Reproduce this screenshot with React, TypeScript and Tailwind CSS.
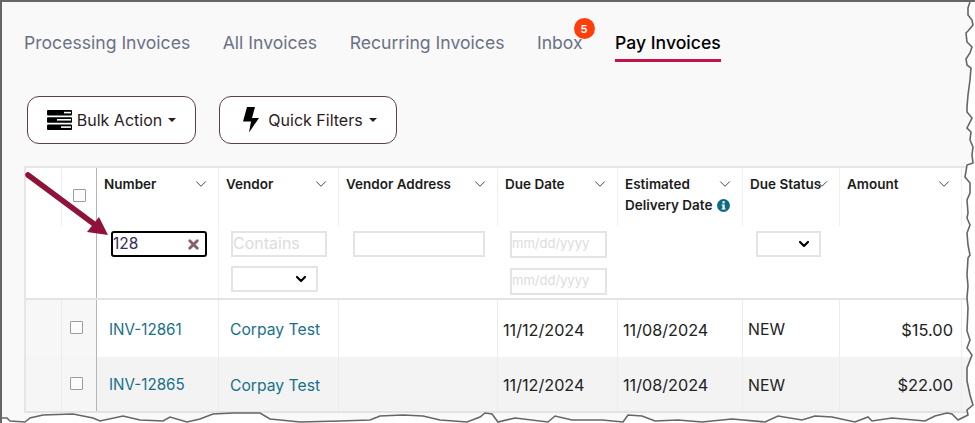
import { ChevronDown, X } from "lucide-react";

const font = "font-['Inter','Liberation_Sans',sans-serif]";
const columns = "grid-cols-[36px_35px_122px_120px_159px_120px_125px_97px_122px_19px]";

const rows = [
  { id: "INV-12861", amount: "$15.00", bg: "bg-white", lead: "bg-[#f7f7f7]", line: "border-t-2 border-[#e3e3e3] h-[59px]" },
  { id: "INV-12865", amount: "$22.00", bg: "bg-[#f3f3f3]", lead: "bg-[#f6f6f6]", line: "border-b-2 border-[#e3e3e3] h-[56px]" },
];

// outline of the torn paper edge, right side then bottom
const edge =
  "M970 2 L968 8 L968 15 L972 20 L973 25 L968 31 L966 33 L967 42 L972 47 L970 53 L966 59 L967 65 L971 68 L970 80 L968 95 L967 107 L967 112 L972 118 L967 128 L971 132 L970 140 L973 147 L972 155 L973 163 L967 165 L965 177 L970 183 L970 193 L967 200 L968 213 L967 218 L970 225 L967 233 L968 245 L970 255 L968 258 L967 275 L968 286 L967 298 L968 308 L967 331 L970 340 L967 348 L972 355 L967 368 L967 381 L970 395 L973 405 L967 410 L968 415 L958 420 L952 414 L947 413 L935 416 L925 421 L892 418 L872 421 L868 417 L855 422 L832 417 L815 416 L802 420 L778 416 L765 422 L732 419 L702 422 L678 420 L655 421 L642 416 L628 415 L623 422 L602 420 L572 420 L555 416 L548 422 L515 418 L498 422 L492 414 L485 413 L480 417 L467 422 L440 420 L423 416 L403 415 L380 416 L370 420 L340 421 L300 422 L280 420 L270 419 L260 413 L233 413 L213 414 L200 419 L187 422 L170 417 L163 421 L140 420 L123 416 L100 421 L93 418 L73 414 L43 415 L30 418 L25 422 L10 421 L7 418 L2 418";

function HeaderCell({ label, second, info }: { label: string; second?: string; info?: boolean }) {
  return (
    <div className="h-[58px] border-r border-[#efefef] pt-[6px] pl-[7px] pr-2 relative text-[13.5px] leading-[21px] font-semibold text-[#1c1c1c]">
      <div>{label}</div>
      {second && (
        <div className="flex items-center gap-[4px]">
          {second}
          {info && (
            <svg width="13" height="13" viewBox="0 0 13 13">
              <circle cx="6.5" cy="6.5" r="6.5" fill="#0f6b80" />
              <rect x="5.5" y="2.2" width="2.2" height="2.2" fill="#fff" />
              <path d="M4.6 5.4 H7.7 V9.4 H8.6 V10.6 H4.6 V9.4 H5.5 V6.6 H4.6 Z" fill="#fff" />
            </svg>
          )}
        </div>
      )}
      <ChevronDown size={18} strokeWidth={1.3} className="absolute top-[7px] right-[8px] text-[#444]" />
    </div>
  );
}

function FilterInput({ placeholder, className }: { placeholder?: string; className: string }) {
  return (
    <div className={`border-2 border-[#e4e4e4] bg-white leading-[21px] text-[#dcdcdc] ${className}`}>
      {placeholder}
    </div>
  );
}

function FilterSelect({ className }: { className: string }) {
  return (
    <div className={`h-[26px] border-2 border-[#e4e4e4] bg-white flex items-center justify-end pr-[7px] ${className}`}>
      <ChevronDown size={16} strokeWidth={3.2} className="text-black" />
    </div>
  );
}

function Checkbox() {
  return <div className="w-[13px] h-[13px] border border-[#9c9c9c] rounded-[1px] bg-[#fbfbfb]" />;
}

export default function App() {
  return (
    <div className={`${font} relative w-[975px] h-[423px] overflow-hidden bg-[#f9f9f9] border-t-2 border-l-2 border-[#666]`}>
      <nav className="flex items-start gap-[32.5px] pl-[22px] pt-[29px] text-[17.6px] leading-[24px] text-[#6c7186]">
        <a>Processing Invoices</a>
        <a>All Invoices</a>
        <a>Recurring Invoices</a>
        <a className="relative">
          Inbox
          <span className="absolute -top-[13px] -right-[12px] w-[21px] h-[21px] rounded-full bg-[#ff3d0d] text-white text-[11px] font-bold flex items-center justify-center">5</span>
        </a>
        <a className="text-black font-medium border-b-[3px] border-[#c2134d] pb-[4px]">Pay Invoices</a>
      </nav>

      <div className="flex gap-[23px] pl-[25px] pt-[34px] text-[16px] text-[#2b1a1f]">
        <button className="flex items-center justify-center gap-[5px] w-[169px] h-[48px] bg-white border border-[#5b4048] rounded-[12px]">
          <svg width="25" height="20" viewBox="0 0 25 20" className="text-black">
            <rect y="0" width="25" height="5.5" rx="1" fill="currentColor" />
            <rect y="7.2" width="25" height="5.5" rx="1" fill="currentColor" />
            <rect y="14.5" width="25" height="5.5" rx="1" fill="currentColor" />
            <rect x="17" y="1.8" width="7" height="1.6" fill="#fff" />
            <rect x="10" y="9" width="14" height="1.6" fill="#fff" />
            <rect x="14" y="16.3" width="10" height="1.6" fill="#fff" />
          </svg>
          Bulk Action
          <span className="ml-[1px] border-x-[4px] border-x-transparent border-t-[4px] border-t-[#2b1a1f]" />
        </button>
        <button className="flex items-center justify-center gap-[5px] w-[178px] h-[48px] pl-[3px] bg-white border border-[#5b4048] rounded-[12px]">
          <svg width="18" height="26" viewBox="0 0 18 26" className="mr-[3px]">
            <path d="M5 0 L13 0 L10 11 L17 11 L7 25.5 L9 14.5 L1 14.5 Z" fill="#000" />
          </svg>
          Quick Filters
          <span className="ml-[1px] border-x-[4px] border-x-transparent border-t-[4px] border-t-[#2b1a1f]" />
        </button>
      </div>

      <div className="ml-[22px] mt-[22px] w-[947px] bg-white border-t-2 border-l-2 border-[#e6e6e6]">
        <div className={`grid ${columns}`}>
          <div className="h-[58px] border-r border-[#efefef]" />
          <div className="h-[58px] flex items-center justify-center pb-[4px] border-r border-[#b5b5b5]"><Checkbox /></div>
          <HeaderCell label="Number" />
          <HeaderCell label="Vendor" />
          <HeaderCell label="Vendor Address" />
          <HeaderCell label="Due Date" />
          <HeaderCell label="Estimated" second="Delivery Date" info />
          <HeaderCell label="Due Status" />
          <HeaderCell label="Amount" />
          <div />

          <div className="h-[72px]" />
          <div className="h-[72px] border-r border-[#b5b5b5]" />
          <div className="h-[72px] pt-[5px] pl-[14px] border-r border-[#f3f3f3]">
            <div className="w-[96px] h-[26px] border-2 border-black rounded-[3px] bg-white flex items-center justify-between pr-[4px] text-[15.5px] text-[#3b2a55]">
              128
              <X size={15} strokeWidth={4.5} className="text-[#84606e]" />
            </div>
          </div>
          <div className="h-[72px] pt-[5px] pl-[12px] flex flex-col gap-[9px]">
            <FilterInput placeholder="Contains" className="w-[96px] h-[26px] text-[16px]" />
            <FilterSelect className="w-[87px]" />
          </div>
          <div className="h-[72px] pt-[5px] pl-[14px]">
            <FilterInput className="w-[132px] h-[26px]" />
          </div>
          <div className="h-[72px] pt-[5px] pl-[12px] flex flex-col gap-[10px]">
            <FilterInput placeholder="mm/dd/yyyy" className="w-[97px] h-[27px] text-[13px]" />
            <FilterInput placeholder="mm/dd/yyyy" className="w-[97px] h-[27px] text-[13px]" />
          </div>
          <div className="h-[72px]" />
          <div className="h-[72px] pt-[5px] pl-[13px]"><FilterSelect className="w-[65px]" /></div>
          <div className="h-[72px]" />
          <div className="h-[72px]" />
        </div>

        {rows.map((row) => (
          <div key={row.id} className={`grid ${columns} ${row.line} ${row.bg} text-[#222]`}>
            <div className={`border-r border-[#ececec] ${row.lead}`} />
            <div className={`border-r border-[#b5b5b5] flex items-center justify-center pr-[5px] pb-[2px] ${row.lead}`}><Checkbox /></div>
            <div className="border-r border-[#ececec] flex items-center pl-[12px] pt-[3px] text-[15.2px] text-[#18708a]">{row.id}</div>
            <div className="border-r border-[#ececec] flex items-center pl-[11px] pt-[3px] text-[15.7px] text-[#18708a]">Corpay Test</div>
            <div className="border-r border-[#ececec]" />
            <div className="border-r border-[#ececec] flex items-center pl-[5px] pt-[3px] text-[16.2px]">11/12/2024</div>
            <div className="border-r border-[#ececec] flex items-center pl-[5px] pt-[3px] text-[16.2px]">11/08/2024</div>
            <div className="border-r border-[#ececec] flex items-center pl-[5px] pt-[3px] text-[15.8px]">NEW</div>
            <div className="border-r border-[#ececec] flex items-center justify-end pr-[8px] pt-[3px] text-[16.4px]">{row.amount}</div>
            <div />
          </div>
        ))}
      </div>

      {/* red pointer arrow over the table */}
      <svg width="120" height="90" viewBox="0 0 120 90" className="absolute left-[20px] top-[168px] pointer-events-none">
        <path d="M6 5 L72 54" stroke="#8f1239" strokeWidth="5.5" strokeLinecap="round" fill="none" />
        <path d="M86 65 L65 62 L77 47 Z" fill="#8f1239" />
      </svg>

      {/* torn paper edge */}
      <svg width="975" height="423" viewBox="0 0 975 423" className="absolute -left-[2px] -top-[2px] pointer-events-none">
        <path d={`${edge} L0 423 L975 423 L975 0 L970 0 Z`} fill="#fff" />
        <path d={edge} fill="none" stroke="#666" strokeWidth="1.6" />
      </svg>
    </div>
  );
}
